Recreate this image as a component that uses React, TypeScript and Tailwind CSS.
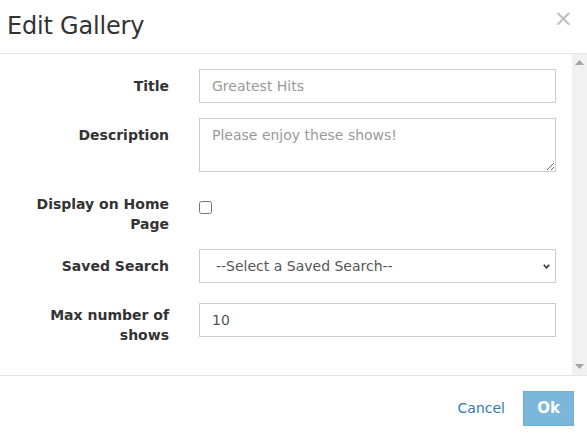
import React from "react";

export default function App() {
  return (
    <div className="w-[587px] h-[436px] bg-white flex flex-col overflow-hidden" style={{ fontFamily: '"DejaVu Sans", Verdana, sans-serif' }}>
      {/* Header */}
      <div className="h-[54px] shrink-0 border-b border-[#e5e5e5] flex items-center justify-between pl-[7px] pr-[14px]">
        <h4 className="text-[24px] leading-none text-[#333] font-normal tracking-[-0.2px] -mt-[2px]">Edit Gallery</h4>
        <span className="text-[23px] leading-none text-[#bdbdbd] -mt-[16px]">×</span>
      </div>

      {/* Body */}
      <div className="h-[321px] shrink-0 flex">
        <div className="flex-1 pt-[15px] pr-[16px] flex flex-col text-[14px] text-[#333]">
          {/* Title */}
          <div className="flex">
            <label className="w-[169px] text-right font-bold pt-[7px] leading-[20px]">Title</label>
            <div className="ml-[30px] flex-1">
              <input
                className="w-full h-[34px] border border-[#ccc] px-[12px] text-[14px] text-[#555] placeholder:text-[#999] outline-none"
                placeholder="Greatest Hits"
              />
            </div>
          </div>
          {/* Description */}
          <div className="flex mt-[15px]">
            <label className="w-[169px] text-right font-bold pt-[7px] leading-[20px]">Description</label>
            <div className="ml-[30px] flex-1">
              <textarea
                className="block w-full h-[54px] border border-[#ccc] px-[12px] py-[6px] text-[14px] leading-[20px] text-[#555] placeholder:text-[#999] outline-none"
                placeholder="Please enjoy these shows!"
              />
            </div>
          </div>
          {/* Display on Home Page */}
          <div className="flex mt-[15px]">
            <label className="w-[169px] text-right font-bold pt-[7px] leading-[20px] pl-[30px]">Display on Home Page</label>
            <div className="ml-[30px] flex-1 pt-[14px]">
              <input type="checkbox" className="block w-[13px] h-[13px] m-0" />
            </div>
          </div>
          {/* Saved Search */}
          <div className="flex mt-[15px]">
            <label className="w-[169px] text-right font-bold pt-[7px] leading-[20px]">Saved Search</label>
            <div className="ml-[30px] flex-1">
              <div className="relative h-[34px] border border-[#ccc] flex items-center pl-[16px] text-[14px] text-[#555]">
                <span>--Select a Saved Search--</span>
                <svg className="absolute right-[5px] top-[14px]" width="7" height="5" viewBox="0 0 7 5">
                  <path d="M0.8 0.8 L3.5 3.8 L6.2 0.8" fill="none" stroke="#333" strokeWidth="1.6" />
                </svg>
              </div>
            </div>
          </div>
          {/* Max number of shows */}
          <div className="flex mt-[15px]">
            <label className="w-[169px] text-right font-bold pt-[7px] leading-[20px] pl-[40px]">Max number of shows</label>
            <div className="ml-[30px] flex-1 pt-[5px]">
              <input
                className="w-full h-[34px] border border-[#ccc] px-[12px] text-[14px] text-[#555] outline-none"
                defaultValue="10"
              />
            </div>
          </div>
        </div>
        {/* Scrollbar */}
        <div className="w-[15px] bg-[#f1f1f1] flex flex-col items-center justify-between py-[6px]">
          <svg width="9" height="5" viewBox="0 0 9 5"><path d="M0 5 L4.5 0 L9 5 Z" fill="#a3a3a3" /></svg>
          <svg width="9" height="5" viewBox="0 0 9 5"><path d="M0 0 L4.5 5 L9 0 Z" fill="#a3a3a3" /></svg>
        </div>
      </div>

      {/* Footer */}
      <div className="flex-1 border-t border-[#e5e5e5] flex items-start justify-end pt-[15px] pr-[13px]">
        <button className="h-[34px] px-[12px] text-[14px] text-[#337ab7] mr-[6px]">Cancel</button>
        <button className="h-[35px] w-[51px] bg-[#7ab7da] border border-[#6fb0d6] text-white text-[15px] font-bold">Ok</button>
      </div>
    </div>
  );
}
